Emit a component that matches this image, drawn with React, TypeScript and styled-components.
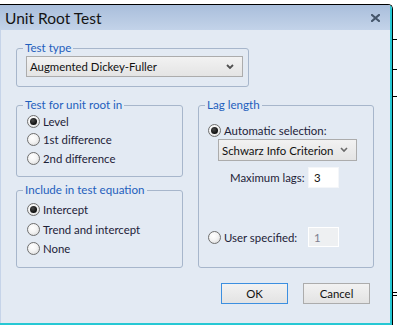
import React from "react";
import styled, { createGlobalStyle } from "styled-components";

const Global = createGlobalStyle`
  html, body { margin: 0; padding: 0; background: #ffffff; }
  body { font-family: Lato, "Noto Sans", sans-serif; }
  * { box-sizing: border-box; }
`;

const Page = styled.div`
  width: 397px;
  height: 325px;
  overflow: hidden;
  display: flex;
  flex-direction: column;
`;

const TopStrip = styled.div`
  height: 4px;
  flex: none;
  overflow: hidden;
  font-size: 12px;
  line-height: 12px;
  color: #222;
  padding-left: 18px;
  white-space: pre;
`;

const TopText = styled.div`
  margin-top: -12px;
`;

const Row = styled.div`
  display: flex;
  flex: 1;
`;

const Dialog = styled.div`
  width: 393px;
  flex: none;
  border-top: 1px solid #000;
  border-right: 1px solid #000;
  border-top-right-radius: 5px;
  overflow: hidden;
  display: flex;
  flex-direction: column;
`;

const Frame = styled.div`
  flex: 1;
  display: flex;
  flex-direction: column;
  border-right: 2px solid #27c8d4;
  border-bottom: 2px solid #27c8d4;
`;

const TitleBar = styled.div`
  height: 25px;
  flex: none;
  background: linear-gradient(#a9bedb, #c3d3e9);
  display: flex;
  align-items: center;
  justify-content: space-between;
  padding: 0 10px 0 5px;
  font-size: 15.5px;
  color: #141414;
`;

const CloseBtn = styled.svg`
  width: 9px;
  height: 8px;
  margin-top: 1px;
`;

const Body = styled.div`
  flex: 1;
  background: #e3eaf3;
  border-left: 1px solid #c6d4e9;
  padding: 18px 0 0 15px;
  display: flex;
  flex-direction: column;
  font-size: 11.4px;
  color: #1d2238;
`;

const Group = styled.div<{ $w?: number; $h: number }>`
  position: relative;
  flex: none;
  ${(p) => (p.$w ? `width: ${p.$w}px;` : "")}
  height: ${(p) => p.$h}px;
  border: 1px solid #a7b6cb;
  border-radius: 3px;
`;

const Legend = styled.span`
  position: absolute;
  top: -9px;
  left: 6px;
  padding: 0 2px;
  background: #e3eaf3;
  color: #1f5fbd;
  font-size: 11.6px;
  line-height: 16px;
  white-space: nowrap;
`;

const Select = styled.div<{ $w: number; $h: number; $ml: number; $mt: number }>`
  width: ${(p) => p.$w}px;
  height: ${(p) => p.$h}px;
  margin-left: ${(p) => p.$ml}px;
  margin-top: ${(p) => p.$mt}px;
  flex: none;
  border: 1px solid #acacac;
  background: linear-gradient(#f2f2f2, #e4e4e4);
  display: flex;
  align-items: center;
  justify-content: space-between;
  padding: 0 8px 0 3px;
  color: #111;
  white-space: nowrap;
`;

const Chevron = styled.svg`
  width: 8px;
  height: 6px;
`;

const Columns = styled.div`
  display: flex;
  gap: 15px;
  margin-top: 18px;
`;

const LeftCol = styled.div`
  width: 167px;
  flex: none;
  display: flex;
  flex-direction: column;
  gap: 13px;
`;

const RadioList = styled.div<{ $pt: number; $row: number }>`
  display: flex;
  flex-direction: column;
  padding: ${(p) => p.$pt}px 0 0 10px;
  & > * {
    height: ${(p) => p.$row}px;
  }
`;

const RadioRow = styled.div`
  display: flex;
  align-items: center;
  gap: 3px;
  white-space: nowrap;
`;

const Circle = styled.span<{ $on?: boolean }>`
  width: 13px;
  height: 13px;
  flex: none;
  border-radius: 50%;
  border: 1px solid #6f6f6f;
  background: radial-gradient(circle at 40% 35%, #ffffff 0%, #f4f4f4 45%, #d2d2d2 100%);
  display: flex;
  align-items: center;
  justify-content: center;
  &::after {
    content: "";
    display: ${(p) => (p.$on ? "block" : "none")};
    width: 7px;
    height: 7px;
    border-radius: 50%;
    background: radial-gradient(circle at 40% 35%, #4a4a4a, #0c0c0c 70%);
  }
`;

const Radio = ({ on, children }: { on?: boolean; children: React.ReactNode }) => (
  <RadioRow>
    <Circle $on={on} />
    <span>{children}</span>
  </RadioRow>
);

const RightCol = styled.div`
  display: flex;
  flex-direction: column;
  padding-left: 9px;
`;

const FieldRow = styled.div<{ $mt: number; $ml: number }>`
  display: flex;
  align-items: center;
  margin-top: ${(p) => p.$mt}px;
  margin-left: ${(p) => p.$ml}px;
  white-space: nowrap;
`;

const Label = styled.span<{ $w: number }>`
  width: ${(p) => p.$w}px;
  flex: none;
`;

const Input = styled.div<{ $h: number; $disabled?: boolean }>`
  width: 31px;
  height: ${(p) => p.$h}px;
  background: ${(p) => (p.$disabled ? "#eef0f2" : "#ffffff")};
  border: 1px solid ${(p) => (p.$disabled ? "#ffffff" : "#f4f6f9")};
  display: flex;
  align-items: center;
  padding-left: 5px;
  color: ${(p) => (p.$disabled ? "#7f7f8f" : "#111")};
`;

const Buttons = styled.div`
  display: flex;
  gap: 15px;
  margin-top: 15px;
  padding-left: 205px;
`;

const Button = styled.div<{ $default?: boolean }>`
  width: 67px;
  height: 21px;
  border: 1px solid ${(p) => (p.$default ? "#3c8fe0" : "#acacac")};
  background: linear-gradient(#f2f2f2, #e3e3e3);
  display: flex;
  align-items: center;
  justify-content: center;
  color: #111;
`;

const RightStrip = styled.div`
  width: 4px;
  display: flex;
  flex-direction: column;
`;

const Tick = styled.div<{ $mt: number }>`
  height: 1px;
  background: #000;
  margin-top: ${(p) => p.$mt}px;
`;

export default function App() {
  return (
    <>
      <Global />
      <Page>
        <TopStrip>
          <TopText>Type:        g          (y,p)</TopText>
        </TopStrip>
        <Row>
          <Dialog>
            <Frame>
              <TitleBar>
                <span>Unit Root Test</span>
                <CloseBtn viewBox="0 0 9 8">
                  <path d="M1 1 L8 7 M8 1 L1 7" stroke="#45566b" strokeWidth="2.2" strokeLinecap="square" />
                </CloseBtn>
              </TitleBar>
              <Body>
                <Group $w={233} $h={39}>
                  <Legend>Test type</Legend>
                  <Select $w={217} $h={21} $ml={9} $mt={7}>
                    <span>Augmented Dickey-Fuller</span>
                    <Chevron viewBox="0 0 8 6">
                      <path d="M1 1 L4 4 L7 1" fill="none" stroke="#505050" strokeWidth="1.8" />
                    </Chevron>
                  </Select>
                </Group>
                <Columns>
                  <LeftCol>
                    <Group $h={72}>
                      <Legend>Test for unit root in</Legend>
                      <RadioList $pt={6} $row={18.5}>
                        <Radio on>Level</Radio>
                        <Radio>1st difference</Radio>
                        <Radio>2nd difference</Radio>
                      </RadioList>
                    </Group>
                    <Group $h={78}>
                      <Legend>Include in test equation</Legend>
                      <RadioList $pt={9} $row={19.5}>
                        <Radio on>Intercept</Radio>
                        <Radio>Trend and intercept</Radio>
                        <Radio>None</Radio>
                      </RadioList>
                    </Group>
                  </LeftCol>
                  <Group $w={176} $h={163}>
                    <Legend>Lag length</Legend>
                    <RightCol>
                      <FieldRow $mt={18} $ml={0}>
                        <Radio on>Automatic selection:</Radio>
                      </FieldRow>
                      <Select $w={139} $h={22} $ml={10} $mt={2}>
                        <span>Schwarz Info Criterion</span>
                        <Chevron viewBox="0 0 8 6">
                          <path d="M1 1 L4 4 L7 1" fill="none" stroke="#6a6a6a" strokeWidth="1.6" />
                        </Chevron>
                      </Select>
                      <FieldRow $mt={6} $ml={22}>
                        <Label $w={78}>Maximum lags:</Label>
                        <Input $h={21}>3</Input>
                      </FieldRow>
                      <FieldRow $mt={39} $ml={0}>
                        <Label $w={100}>
                          <Radio>User specified:</Radio>
                        </Label>
                        <Input $h={20} $disabled>1</Input>
                      </FieldRow>
                    </RightCol>
                  </Group>
                </Columns>
                <Buttons>
                  <Button $default>OK</Button>
                  <Button>Cancel</Button>
                </Buttons>
              </Body>
            </Frame>
          </Dialog>
          <RightStrip>
            <Tick $mt={35} />
            <Tick $mt={29} />
            <Tick $mt={26} />
            <Tick $mt={195} />
            <Tick $mt={2} />
          </RightStrip>
        </Row>
      </Page>
    </>
  );
}
